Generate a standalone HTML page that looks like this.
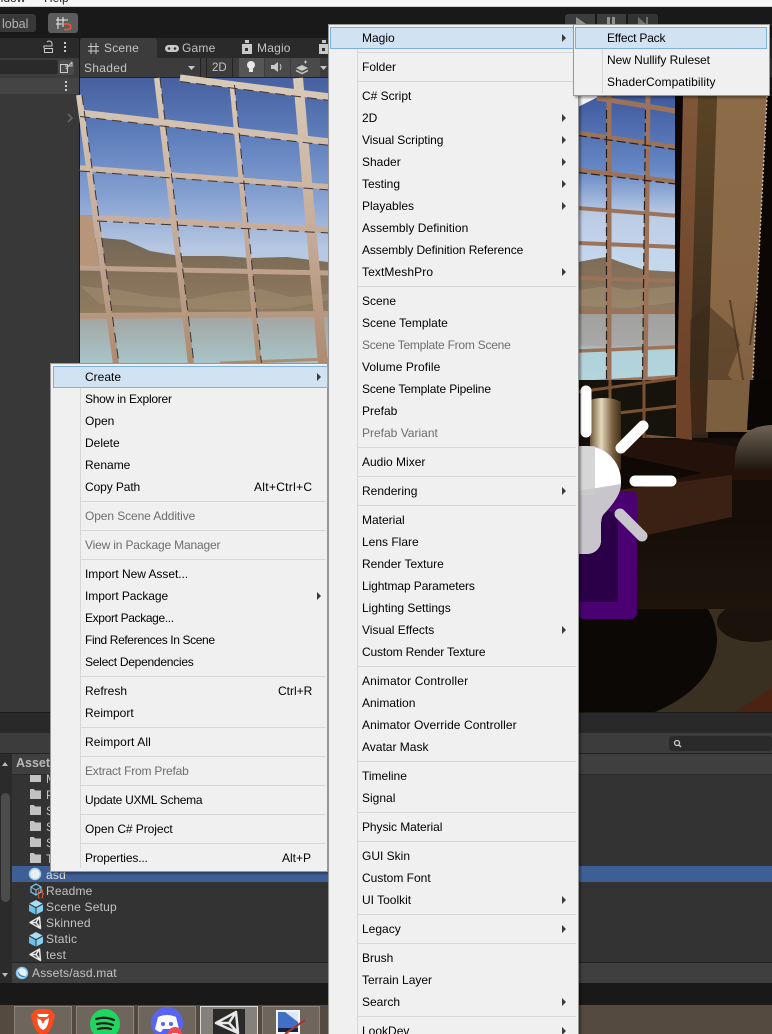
<!DOCTYPE html>
<html><head><meta charset="utf-8"><title>Unity Editor</title>
<style>
html,body{margin:0;padding:0;width:772px;height:1034px;overflow:hidden;background:#191919}
body{position:relative;font-family:"Liberation Sans",sans-serif;font-size:12px}
.b{position:absolute}
.t{position:absolute;white-space:nowrap;line-height:16px;color:#c4c4c4}
.i{position:absolute;white-space:nowrap;line-height:22px;height:22px;color:#000}
.g{color:#6d6d6d}
.m1 .i{left:85px}.m2 .i{left:362px}.m3 .i{left:607px}
.r{position:absolute;white-space:nowrap;line-height:22px;color:#000}
.s{position:absolute;height:1px;background:#d7d7d7}
.m1 .s{left:81px;width:245px}.m2 .s{left:358px;width:218px}
.a{position:absolute;width:0;height:0;border-left:4px solid #3a3a3a;border-top:4px solid transparent;border-bottom:4px solid transparent}
.menu{position:absolute;background:#f0f0f0;border:1px solid #979797;box-sizing:border-box;box-shadow:2px 2px 2px rgba(0,0,0,.35)}
.hl{position:absolute;background:#d1e2f2;border:1px solid #7fb0e4;box-sizing:border-box}
.gut{position:absolute;width:1px;background:#d7d7d7}
svg{position:absolute;left:0;top:0}
</style></head><body>

<!-- chrome panels -->
<div class="b" style="left:0;top:0;width:772px;height:6px;background:#f6f6f6"></div>
<div class="b" style="left:0;top:6px;width:772px;height:1px;background:#d0d0d0"></div>
<div class="b" style="left:0;top:7px;width:772px;height:31px;background:#191919"></div>
<div class="t" style="left:-6px;top:-10px;color:#222">indow</div>
<div class="t" style="left:44px;top:-10px;color:#222">Help</div>
<div class="b" style="left:0;top:14px;width:36px;height:18px;background:#383838;border-radius:0 3px 3px 0"></div>
<div class="t" style="left:2px;top:16px;color:#b4b4b4;font-size:12.5px">lobal</div>
<div class="b" style="left:48px;top:13px;width:30px;height:20px;background:#5c5c5c;border-radius:3px"></div>
<div class="b" style="left:565px;top:14px;width:30px;height:12px;background:#3c3c3c;border-radius:3px 0 0 0"></div>
<div class="b" style="left:597px;top:14px;width:29px;height:12px;background:#3c3c3c"></div>
<div class="b" style="left:628px;top:14px;width:30px;height:12px;background:#333;border-radius:0 3px 0 0"></div>

<!-- hierarchy -->
<div class="b" style="left:0;top:38px;width:79px;height:675px;background:#383838"></div>
<div class="b" style="left:0;top:38px;width:79px;height:20px;background:#2a2a2a"></div>
<div class="b" style="left:0;top:58px;width:79px;height:20px;background:#3c3c3c"></div>
<div class="b" style="left:0;top:60px;width:58px;height:14px;background:#2a2a2a;border-radius:0 3px 3px 0"></div>
<div class="b" style="left:58px;top:60px;width:16px;height:15px;background:#4a4a4a;border-radius:3px"></div>
<div class="b" style="left:0;top:78px;width:79px;height:16px;background:#444"></div>
<div class="b" style="left:79px;top:38px;width:1px;height:675px;background:#191919"></div>

<!-- scene tabs -->
<div class="b" style="left:80px;top:38px;width:692px;height:20px;background:#2a2a2a"></div>
<div class="b" style="left:80px;top:38px;width:77px;height:20px;background:#3c3c3c;border-radius:3px 3px 0 0"></div>
<div class="b" style="left:80px;top:58px;width:692px;height:20px;background:#3c3c3c"></div>
<div class="b" style="left:80px;top:77px;width:692px;height:1px;background:#222"></div>
<div class="t" style="left:104px;top:40px;letter-spacing:.2px">Scene</div>
<div class="t" style="left:182px;top:40px;letter-spacing:.2px">Game</div>
<div class="t" style="left:257px;top:40px;letter-spacing:.2px">Magio</div>
<div class="t" style="left:84px;top:60px;letter-spacing:.3px">Shaded</div>
<div class="b" style="left:200px;top:58px;width:1px;height:19px;background:#222"></div>
<div class="b" style="left:206px;top:58px;width:1px;height:19px;background:#222"></div>
<div class="b" style="left:232px;top:58px;width:1px;height:19px;background:#222"></div>
<div class="t" style="left:212px;top:60px;font-size:11.5px;">2D</div>
<div class="b" style="left:239px;top:58px;width:25px;height:19px;background:#555"></div>
<div class="b" style="left:265px;top:58px;width:25px;height:19px;background:#4a4a4a"></div>
<div class="b" style="left:291px;top:58px;width:29px;height:19px;background:#4a4a4a"></div>

<!-- scene & icons svg -->
<svg width="772" height="1034" viewBox="0 0 772 1034">
<defs>
<linearGradient id="sky" gradientUnits="userSpaceOnUse" x1="0" y1="78" x2="0" y2="250"><stop offset="0" stop-color="#47609f"/><stop offset=".35" stop-color="#5f7fbd"/><stop offset=".7" stop-color="#87a2d2"/><stop offset="1" stop-color="#b7c8e2"/></linearGradient>
<linearGradient id="sky2" gradientUnits="userSpaceOnUse" x1="0" y1="96" x2="0" y2="262"><stop offset="0" stop-color="#3f5a9e"/><stop offset=".45" stop-color="#6789c6"/><stop offset=".72" stop-color="#bccce6"/><stop offset="1" stop-color="#c4d8ec"/></linearGradient>
<linearGradient id="water" gradientUnits="userSpaceOnUse" x1="0" y1="313" x2="0" y2="363"><stop offset="0" stop-color="#a3a3a0"/><stop offset="1" stop-color="#a8c4c8"/></linearGradient>
<linearGradient id="water2" gradientUnits="userSpaceOnUse" x1="0" y1="313" x2="0" y2="383"><stop offset="0" stop-color="#a0a09e"/><stop offset=".45" stop-color="#a8a8a6"/><stop offset=".55" stop-color="#b0d2da"/><stop offset="1" stop-color="#b4d4dc"/></linearGradient>
<linearGradient id="bar" gradientUnits="userSpaceOnUse" x1="0" y1="78" x2="0" y2="363"><stop offset="0" stop-color="#d9cab8"/><stop offset=".5" stop-color="#c8ae9c"/><stop offset="1" stop-color="#ad8b70"/></linearGradient>
<linearGradient id="mt" gradientUnits="userSpaceOnUse" x1="0" y1="240" x2="0" y2="312"><stop offset="0" stop-color="#746755"/><stop offset=".45" stop-color="#84705a"/><stop offset="1" stop-color="#8f7b60"/></linearGradient>
<linearGradient id="wall" gradientUnits="userSpaceOnUse" x1="0" y1="96" x2="0" y2="430"><stop offset="0" stop-color="#8b6b48"/><stop offset=".6" stop-color="#8a6845"/><stop offset="1" stop-color="#7a5c3c"/></linearGradient>
<linearGradient id="frame" gradientUnits="userSpaceOnUse" x1="0" y1="96" x2="0" y2="440"><stop offset="0" stop-color="#7f563a"/><stop offset="1" stop-color="#6a3f24"/></linearGradient>
<linearGradient id="strip" gradientUnits="userSpaceOnUse" x1="0" y1="96" x2="0" y2="440"><stop offset="0" stop-color="#5a4426"/><stop offset="1" stop-color="#33241a"/></linearGradient>
<linearGradient id="lamp" gradientUnits="userSpaceOnUse" x1="590" y1="0" x2="622" y2="0"><stop offset="0" stop-color="#6a5434"/><stop offset=".35" stop-color="#e4d8bb"/><stop offset=".7" stop-color="#7a6040"/><stop offset="1" stop-color="#3a2a18"/></linearGradient>
<linearGradient id="pouf" gradientUnits="userSpaceOnUse" x1="0" y1="425" x2="0" y2="470"><stop offset="0" stop-color="#6d6355"/><stop offset="1" stop-color="#1f1710"/></linearGradient>
<linearGradient id="floor" gradientUnits="userSpaceOnUse" x1="0" y1="520" x2="0" y2="609"><stop offset="0" stop-color="#150d07"/><stop offset="1" stop-color="#1e140c"/></linearGradient>
</defs>

<!-- left window -->
<rect x="80" y="78" width="250" height="286" fill="url(#sky)"/>
<path d="M80 240 102 238 125 240 150 251 180 256 222 256 250 258 287 257 328 262V313H80Z" fill="url(#mt)"/>
<path d="M80 286l40 4 30 6 40 3 30-6 40-4 30 8 38-3v6l-38 8-60 2-60-2-70-4z" fill="#ad9c7e" opacity=".35"/>
<rect x="80" y="313" width="250" height="51" fill="url(#water)"/>
<path d="M80 215H92L100 270H80Z" fill="#b6957a"/>
<g fill="none" stroke="url(#bar)">
<path d="M79 95 116 364" stroke-width="6"/>
<path d="M157 78 191 364" stroke-width="6"/>
<path d="M232 85 259 364" stroke-width="5"/>
<path d="M298 78 323 364" stroke-width="10"/>
<path d="M180 78 330 97" stroke-width="7"/>
<path d="M80 113 330 142" stroke-width="7"/>
<path d="M80 168 330 187" stroke-width="5.5"/>
<path d="M97 218 330 230" stroke-width="6"/>
<path d="M80 268 330 273" stroke-width="5"/>
<path d="M80 316 330 314" stroke-width="6"/>
<path d="M220 363 328 359" stroke-width="3"/>
</g>
<g fill="none" stroke="#3a3438" stroke-width="1" stroke-dasharray="10 6">
<path d="M82 95 119 364"/><path d="M160 78 194 364"/><path d="M234.500 85 261.500 364"/>
<path d="M180 81.500 330 100.500"/><path d="M80 116.500 330 145.500"/><path d="M80 171 330 190"/><path d="M97 221 330 233"/>
</g>

<!-- right window -->
<rect x="578" y="96" width="106" height="290" fill="url(#sky2)"/>
<path d="M578 262 600 258 607 257 620 262 645 270 680 272V312H578Z" fill="url(#mt)"/>
<path d="M578 290l30-4 20 4 50-4v16l-50 6-50-2z" fill="#ad9c7e" opacity=".35"/>
<rect x="578" y="313" width="104" height="72" fill="url(#water2)"/>
<path d="M578 96H600L578 107Z" fill="#f4f4f4"/>
<g fill="none" stroke="#9c7358">
<path d="M609 96V390" stroke-width="5"/><path d="M648 96 645 390" stroke-width="5"/>
<path d="M597 98 682 112" stroke-width="5"/>
<path d="M578 133 682 148" stroke-width="4.5"/>
<path d="M578 170 680 182" stroke-width="4.5"/>
<path d="M578 208 679 216" stroke-width="4"/>
<path d="M578 243 678 247" stroke-width="4"/>
<path d="M578 278 677 281" stroke-width="4"/>
<path d="M578 312H677" stroke-width="4"/>
<path d="M578 351 675 347" stroke-width="3.5"/>
<path d="M578 383 675 377" stroke-width="4"/>
</g>
<g fill="none" stroke="#2a1e1c" stroke-width="1.2" stroke-dasharray="9 4">
<path d="M606.500 110V380"/><path d="M645.500 110 642.500 380"/>
<path d="M578 135.500 682 150.500"/><path d="M578 172.500 680 184.500"/>
</g>
<!-- wall -->
<rect x="675" y="96" width="97" height="360" fill="#0c0704"/>
<path d="M683 96H699L690 400 676 440Z" fill="url(#frame)"/>
<path d="M698 96H717L708 440H688Z" fill="url(#strip)"/>
<path d="M717 96H767L750 432H706Z" fill="url(#wall)"/>
<path d="M690 320 708 305 735 330 740 345 728 375 742 392 705 392 690 392Z" fill="#3a2a18" opacity=".45"/>
<path d="M730 300 745 392M756 300 750 345" stroke="#3a2a18" stroke-width="2" opacity=".6" fill="none"/>
<path d="M767 96 750 432" stroke="#c9b8a0" stroke-width="1.500" stroke-dasharray="2 2" fill="none"/>

<!-- lower room -->
<rect x="578" y="380" width="100" height="60" fill="#15130c"/>
<g stroke="#7a5233" fill="none" stroke-width="3"><path d="M578 392 678 378"/><path d="M610 380V440"/><path d="M644 380V438"/><path d="M610 414 678 406"/><path d="M646 436 690 440"/></g>
<rect x="578" y="609" width="194" height="104" fill="#3a3022"/>
<ellipse cx="755" cy="622" rx="38" ry="20" fill="#1a120b"/>
<path d="M735 712 772 688V712Z" fill="#4a2312"/>
<ellipse cx="580" cy="640" rx="137" ry="86" fill="#0c0805"/>
<rect x="578" y="438" width="194" height="171" fill="url(#floor)"/>
<rect x="578" y="438" width="194" height="82" fill="#150d07"/>
<path d="M620 438 690 440 772 452V480H740L620 490Z" fill="#24120a"/>
<path d="M676 380H690L692 440 676 438Z" fill="#6e4327"/>
<path d="M690 380H708L706 434H692Z" fill="#3f2815"/>
<path d="M708 380H750L747 430 706 432Z" fill="#7c5f3e"/>
<path d="M750 380H772V430H747Z" fill="#0a0603"/>
<path d="M620 455 702 473 620 490Z" fill="#0f0804"/>
<path d="M735 470C733 440 745 426 772 425V470Z" fill="url(#pouf)"/>
<path d="M620 490 732 475 732 517 647 535 620 513Z" fill="#3b2113"/>
<path d="M590 400C598 397 614 397 621 402V470H590Z" fill="url(#lamp)"/>
<!-- light gizmo -->
<rect x="578" y="491" width="59" height="128" rx="6" fill="#4a0070"/>
<rect x="578" y="511" width="40" height="91" fill="#2b0048"/>
<path d="M578 446H586A35 35 0 0 1 621 481C621 495 612 505 603 515 600 520 601 530 601 540 601 549 594 554 586 554H578Z" fill="#fff"/>
<path d="M578 491 621 484C621 495 612 505 603 515 600 520 601 530 601 540 601 549 594 554 586 554H578Z" fill="#c9c5cd"/>
<path d="M578 446H595V495H578Z" fill="#ccc" opacity=".8"/>
<g stroke-linecap="round" stroke-width="11" fill="none">
<path d="M586 391V432" stroke="#fff"/><path d="M621 448 643 426" stroke="#fff"/>
<path d="M635 481H671" stroke="#fff"/><path d="M620 514 642 536" stroke="#c9c5cd"/>
</g>

<!-- bottom panels -->
<rect x="0" y="712" width="772" height="1" fill="#191919"/>
<rect x="0" y="713" width="772" height="20" fill="#292929"/>
<rect x="0" y="733" width="772" height="20" fill="#3c3c3c"/>
<rect x="0" y="753" width="772" height="1" fill="#222"/>
<rect x="0" y="754" width="772" height="210" fill="#333"/>
<rect x="12" y="754" width="760" height="20" fill="#3f3f3f"/>
<rect x="12" y="774" width="760" height="1" fill="#2a2a2a"/>
<rect x="0" y="754" width="12" height="230" fill="#2b2b2b"/>
<rect x="1" y="793" width="9" height="109" rx="4.500" fill="#4c4c4c"/>
<path d="M2 766 5 762 8 766Z" fill="#bbb"/><path d="M2 973 5 977 8 973Z" fill="#bbb"/>
<rect x="12" y="866" width="760" height="16" fill="#3e5f96"/>
<rect x="12" y="962" width="760" height="1" fill="#222"/>
<rect x="12" y="963" width="760" height="20" fill="#3f3f3f"/>
<rect x="0" y="983" width="772" height="22" fill="#191919"/>
<rect x="0" y="1005" width="772" height="29" fill="#544a3f"/>
<rect x="669" y="736" width="103" height="15" rx="3" fill="#2a2a2a"/>
<circle cx="677" cy="743" r="2.500" fill="none" stroke="#ccc" stroke-width="1.300"/><path d="M679 745 681 747" stroke="#ccc" stroke-width="1.300"/>

<!-- folders -->
<g fill="#c2c2c2">
<path d="M30 775h11v7H30z"/><path d="M30 789h4l1 1.500h6V799H30z"/><path d="M30 805h4l1 1.500h6V815H30z"/><path d="M30 821h4l1 1.500h6V831H30z"/><path d="M30 837h4l1 1.500h6V847H30z"/><path d="M30 853h4l1 1.500h6V863H30z"/>
</g>
<!-- material icons -->
<circle cx="35" cy="874" r="5.500" fill="#eee" stroke="#9fd0ee" stroke-width="1.500"/><path d="M31 877a6 6 0 0 0 9-1 6 6 0 0 1-9 1z" fill="#4d7fb0"/>
<circle cx="22" cy="973" r="5.500" fill="#e8f0f4" stroke="#7cc4ee" stroke-width="1.500"/><path d="M18 971a5 5 0 0 0 8 5 7 7 0 0 1-8-5z" fill="#3a84b8"/>
<!-- readme -->
<path d="M36 884 41 887V892L36 895 31 892V887Z" fill="none" stroke="#7ccbf2" stroke-width="1.200"/>
<path d="M31 887 36 890 41 887M36 890V895" fill="none" stroke="#7ccbf2" stroke-width="1"/>
<path d="M39.500 890c-1 0-1 1-1 2.500 0 1-1 1.200-1 1.500s1 .5 1 1.500c0 1.500 0 2.500 1 2.500M41.500 890c1 0 1 1 1 2.500 0 1 1 1.200 1 1.500s-1 .5-1 1.500c0 1.500 0 2.500-1 2.500" fill="none" stroke="#f0562a" stroke-width="1"/>
<!-- prefab cubes -->
<g><path d="M36 900 42.500 903.500 36 907 29.500 903.500Z" fill="#a8dff8"/><path d="M29 904.500 35.500 908V914.500L29 911Z" fill="#6cc0ec"/><path d="M43 904.500 36.500 908V914.500L43 911Z" fill="#86d0f4"/></g>
<g><path d="M36 932 42.500 935.500 36 939 29.500 935.500Z" fill="#a8dff8"/><path d="M29 936.500 35.500 940V946.500L29 943Z" fill="#6cc0ec"/><path d="M43 936.500 36.500 940V946.500L43 943Z" fill="#86d0f4"/></g>
<!-- unity icons -->
<g fill="none" stroke="#e6e6e6" stroke-width="1.500" stroke-linejoin="round">
<path d="M30 922.500 39.500 917 40.500 928.500Z M30 922.500H36M39.500 917 36 922.500 40.500 928.500"/>
<path d="M30 954.500 39.500 949 40.500 960.500Z M30 954.500H36M39.500 949 36 954.500 40.500 960.500"/>
</g>

<!-- taskbar -->
<g stroke="#8d847b" fill="#6e655c">
<rect x="14.500" y="1006.500" width="57" height="40"/><rect x="76.500" y="1006.500" width="57" height="40"/><rect x="138.500" y="1006.500" width="57" height="40"/><rect x="262.500" y="1006.500" width="57" height="40"/>
</g>
<rect x="200.500" y="1006.500" width="57" height="40" fill="#85807a" stroke="#dcdcdc"/>
<path d="M35 1010 39 1009H47L51 1010 55 1015 53 1024 49 1032 43 1036 37 1032 33 1024 31 1015Z" fill="#fb4c1d"/>
<path d="M37 1018 41 1020 43 1024 45 1020 49 1018 48 1024 46 1028 43 1030 40 1028 38 1024Z" fill="#fff"/>
<path d="M37 1014H49L47 1017H39Z" fill="#fff"/>
<circle cx="105" cy="1024" r="15" fill="#1ed760"/>
<g fill="none" stroke="#1a1a1a" stroke-width="2.200" stroke-linecap="round"><path d="M96 1019Q105 1016 114 1020"/><path d="M97 1024Q105 1022 113 1025"/><path d="M98 1029Q105 1027 111 1029"/></g>
<circle cx="167" cy="1023" r="16" fill="#5865f2"/>
<path d="M158 1017Q167 1013 176 1017L179 1029Q176 1032 173 1032L171 1029H163L161 1032Q158 1032 155 1029Z" fill="#fff"/>
<circle cx="163" cy="1024" r="2" fill="#5865f2"/><circle cx="171" cy="1024" r="2" fill="#5865f2"/>
<circle cx="175" cy="1034" r="7" fill="#f04a50"/><rect x="172" y="1033" width="6" height="2" fill="#fff"/>
<rect x="213" y="1009" width="32" height="25" fill="#2a2a2a"/>
<g fill="none" stroke="#e8e8e8" stroke-width="2.500" stroke-linejoin="round"><path d="M216 1023 236 1012 238 1033Z M216 1023H229M236 1012 229 1023 238 1033"/></g>
<rect x="276" y="1010" width="24" height="24" fill="#f4f4f4"/>
<rect x="278" y="1012" width="20" height="18" fill="#3f70c4"/>
<path d="M285 1012H298V1022Z" fill="#dce8f8"/><rect x="278" y="1028" width="20" height="4" fill="#17233e"/>
<path d="M285 1034 305 1020" stroke="#a83232" stroke-width="2"/>

<!-- tab icons -->
<g stroke="#c8c8c8" stroke-width="1" fill="none"><path d="M91 43V54M96 43V54M88 46.500H99M88 51H99"/></g>
<rect x="165" y="45" width="14" height="7" rx="3.500" fill="#c8c8c8"/><circle cx="169" cy="48.500" r="1.300" fill="#333"/><circle cx="175" cy="48.500" r="1.300" fill="#333"/>
<g fill="#c8c8c8"><rect x="242" y="44" width="10" height="10"/><rect x="245" y="40" width="4" height="3"/><rect x="319" y="44" width="9" height="10"/><rect x="322" y="40" width="4" height="3"/></g>
<rect x="245" y="48" width="3" height="3" fill="#333"/><rect x="322" y="48" width="3" height="3" fill="#333"/>
<path d="M188 66H195L191.500 70Z" fill="#c8c8c8"/>
<path d="M320 66H327L323.500 70Z" fill="#c8c8c8"/>
<circle cx="251" cy="65" r="4" fill="#e8e8e8"/><rect x="249" y="68" width="4" height="4" fill="#e8e8e8"/>
<path d="M271 65H274L278 62V72L274 69H271Z" fill="#c8c8c8"/><path d="M280 64Q282 67 280 70" stroke="#c8c8c8" fill="none"/>
<path d="M296 68 302 65 308 68 302 71Z" fill="#c8c8c8"/><path d="M296 70.500 302 73.500 308 70.500" stroke="#c8c8c8" fill="none" stroke-width="1.500"/><path d="M304 62h3M305.500 60.500v3" stroke="#c8c8c8"/>
<path d="M44 48V46H52V43A3 3 0 0 0 47 42" fill="none" stroke="#ccc" stroke-width="1"/>
<rect x="44.500" y="48.500" width="8" height="4" fill="none" stroke="#ccc"/>
<g fill="#ccc"><rect x="64" y="42" width="2" height="2"/><rect x="64" y="46" width="2" height="2"/><rect x="64" y="50" width="2" height="2"/><rect x="65" y="81" width="2" height="2"/><rect x="65" y="85" width="2" height="2"/><rect x="65" y="89" width="2" height="2"/></g>
<rect x="60.500" y="64.500" width="7" height="8" fill="none" stroke="#ccc"/><path d="M65 66H72V62M72 62 66 69" stroke="#ccc" fill="none"/>
<path d="M68 114 72 118 68 122" stroke="#6a6a6a" stroke-width="1.500" fill="none"/>
<!-- snap icon -->
<g stroke="#eee" stroke-width="1" fill="none"><path d="M58 17V29M63 17V27M56 20H68M56 24H62"/></g>
<path d="M64 24H68A2.500 2.500 0 0 1 68 29.500H64" fill="none" stroke="#f0562a" stroke-width="1.600"/>
<!-- toolbar play glyphs -->
<path d="M576 17 586 24H576Z" fill="#909090"/><rect x="607" y="17" width="3" height="8" fill="#909090"/><rect x="612" y="17" width="3" height="8" fill="#909090"/><path d="M638 17 646 24H638Z" fill="#707070"/><rect x="646" y="17" width="2" height="8" fill="#707070"/>
</svg>

<!-- project labels -->
<div class="t" style="left:16px;top:755px;font-weight:bold;color:#b8b8b8;font-size:12.500px">Assets</div>
<div class="t" style="left:46px;top:771px">M</div><div class="t" style="left:46px;top:787px">P</div><div class="t" style="left:46px;top:803px">S</div><div class="t" style="left:46px;top:819px">S</div><div class="t" style="left:46px;top:835px">S</div><div class="t" style="left:46px;top:851px">T</div>
<div class="t" style="left:46px;top:867px;color:#e0e0e0;letter-spacing:.2px">asd</div>
<div class="t" style="left:46px;top:883px;letter-spacing:.2px">Readme</div>
<div class="t" style="left:46px;top:899px;letter-spacing:.2px">Scene Setup</div>
<div class="t" style="left:46px;top:915px;letter-spacing:.2px">Skinned</div>
<div class="t" style="left:46px;top:931px;letter-spacing:.2px">Static</div>
<div class="t" style="left:46px;top:947px;letter-spacing:.2px">test</div>
<div class="t" style="left:32px;top:965px;letter-spacing:.2px">Assets/asd.mat</div>

<!-- context menu -->
<div class="menu" style="left:50px;top:363px;width:278px;height:509px"></div>
<div class="gut" style="left:80px;top:366px;height:502px"></div>
<div class="hl" style="left:53px;top:366px;width:275px;height:22px"></div>
<div class="m1">
<div class="i" style="top:366px">Create</div><div class="a" style="left:317px;top:373px"></div>
<div class="i" style="top:388px;letter-spacing:-.25px">Show in Explorer</div>
<div class="i" style="top:410px">Open</div>
<div class="i" style="top:432px">Delete</div>
<div class="i" style="top:454px">Rename</div>
<div class="i" style="top:476px;letter-spacing:-.1px">Copy Path</div><div class="r" style="left:254px;top:476px;letter-spacing:.3px">Alt+Ctrl+C</div>
<div class="s" style="top:501px"></div>
<div class="i g" style="top:505px;letter-spacing:-.1px">Open Scene Additive</div>
<div class="s" style="top:530px"></div>
<div class="i g" style="top:534px;letter-spacing:-.17px">View in Package Manager</div>
<div class="s" style="top:559px"></div>
<div class="i" style="top:563px;letter-spacing:-.05px">Import New Asset...</div>
<div class="i" style="top:585px;letter-spacing:-.07px">Import Package</div><div class="a" style="left:317px;top:592px"></div>
<div class="i" style="top:607px;letter-spacing:-.35px">Export Package...</div>
<div class="i" style="top:629px;letter-spacing:-.38px">Find References In Scene</div>
<div class="i" style="top:651px;letter-spacing:-.26px">Select Dependencies</div>
<div class="s" style="top:676px"></div>
<div class="i" style="top:680px">Refresh</div><div class="r" style="left:278px;top:680px">Ctrl+R</div>
<div class="i" style="top:702px">Reimport</div>
<div class="s" style="top:727px"></div>
<div class="i" style="top:731px;letter-spacing:.1px">Reimport All</div>
<div class="s" style="top:756px"></div>
<div class="i g" style="top:760px;letter-spacing:-.2px">Extract From Prefab</div>
<div class="s" style="top:785px"></div>
<div class="i" style="top:789px;letter-spacing:-.28px">Update UXML Schema</div>
<div class="s" style="top:814px"></div>
<div class="i" style="top:818px;letter-spacing:-.07px">Open C# Project</div>
<div class="s" style="top:843px"></div>
<div class="i" style="top:847px;letter-spacing:-.15px">Properties...</div><div class="r" style="left:282px;top:847px">Alt+P</div>
</div>

<!-- create submenu -->
<div class="menu" style="left:328px;top:24px;width:251px;height:1020px"></div>
<div class="gut" style="left:357px;top:27px;height:1007px"></div>
<div class="hl" style="left:330px;top:27px;width:246px;height:22px"></div>
<div class="m2">
<div class="i" style="top:27px">Magio</div><div class="a" style="left:562px;top:34px"></div>
<div class="s" style="top:52px"></div>
<div class="i" style="top:56px">Folder</div>
<div class="s" style="top:81px"></div>
<div class="i" style="top:85px">C# Script</div>
<div class="i" style="top:107px">2D</div><div class="a" style="left:562px;top:114px"></div>
<div class="i" style="top:129px;letter-spacing:-.07px">Visual Scripting</div><div class="a" style="left:562px;top:136px"></div>
<div class="i" style="top:151px">Shader</div><div class="a" style="left:562px;top:158px"></div>
<div class="i" style="top:173px">Testing</div><div class="a" style="left:562px;top:180px"></div>
<div class="i" style="top:195px">Playables</div><div class="a" style="left:562px;top:202px"></div>
<div class="i" style="top:217px;letter-spacing:.05px">Assembly Definition</div>
<div class="i" style="top:239px;letter-spacing:-.1px">Assembly Definition Reference</div>
<div class="i" style="top:261px;letter-spacing:.1px">TextMeshPro</div><div class="a" style="left:562px;top:268px"></div>
<div class="s" style="top:286px"></div>
<div class="i" style="top:290px">Scene</div>
<div class="i" style="top:312px">Scene Template</div>
<div class="i g" style="top:334px;letter-spacing:-.24px">Scene Template From Scene</div>
<div class="i" style="top:356px;letter-spacing:.07px">Volume Profile</div>
<div class="i" style="top:378px;letter-spacing:-.13px">Scene Template Pipeline</div>
<div class="i" style="top:400px">Prefab</div>
<div class="i g" style="top:422px">Prefab Variant</div>
<div class="s" style="top:447px"></div>
<div class="i" style="top:451px">Audio Mixer</div>
<div class="s" style="top:476px"></div>
<div class="i" style="top:480px">Rendering</div><div class="a" style="left:562px;top:487px"></div>
<div class="s" style="top:505px"></div>
<div class="i" style="top:509px">Material</div>
<div class="i" style="top:531px">Lens Flare</div>
<div class="i" style="top:553px">Render Texture</div>
<div class="i" style="top:575px;letter-spacing:-.1px">Lightmap Parameters</div>
<div class="i" style="top:597px">Lighting Settings</div>
<div class="i" style="top:619px">Visual Effects</div><div class="a" style="left:562px;top:626px"></div>
<div class="i" style="top:641px;letter-spacing:-.15px">Custom Render Texture</div>
<div class="s" style="top:666px"></div>
<div class="i" style="top:670px;letter-spacing:.15px">Animator Controller</div>
<div class="i" style="top:692px">Animation</div>
<div class="i" style="top:714px;letter-spacing:.07px">Animator Override Controller</div>
<div class="i" style="top:736px">Avatar Mask</div>
<div class="s" style="top:761px"></div>
<div class="i" style="top:765px">Timeline</div>
<div class="i" style="top:787px">Signal</div>
<div class="s" style="top:812px"></div>
<div class="i" style="top:816px;letter-spacing:-.07px">Physic Material</div>
<div class="s" style="top:841px"></div>
<div class="i" style="top:845px">GUI Skin</div>
<div class="i" style="top:867px">Custom Font</div>
<div class="i" style="top:889px">UI Toolkit</div><div class="a" style="left:562px;top:896px"></div>
<div class="s" style="top:914px"></div>
<div class="i" style="top:918px">Legacy</div><div class="a" style="left:562px;top:925px"></div>
<div class="s" style="top:943px"></div>
<div class="i" style="top:947px">Brush</div>
<div class="i" style="top:969px">Terrain Layer</div>
<div class="i" style="top:991px">Search</div><div class="a" style="left:562px;top:998px"></div>
<div class="s" style="top:1016px"></div>
<div class="i" style="top:1020px">LookDev</div><div class="a" style="left:562px;top:1027px"></div>
</div>

<!-- magio submenu -->
<div class="menu" style="left:573px;top:24px;width:197px;height:72px"></div>
<div class="gut" style="left:602px;top:27px;height:66px"></div>
<div class="hl" style="left:575px;top:27px;width:192px;height:22px"></div>
<div class="m3">
<div class="i" style="top:27px;letter-spacing:-.2px">Effect Pack</div>
<div class="i" style="top:49px;letter-spacing:-.06px">New Nullify Ruleset</div>
<div class="i" style="top:71px;letter-spacing:.06px">ShaderCompatibility</div>
</div>
</body></html>
